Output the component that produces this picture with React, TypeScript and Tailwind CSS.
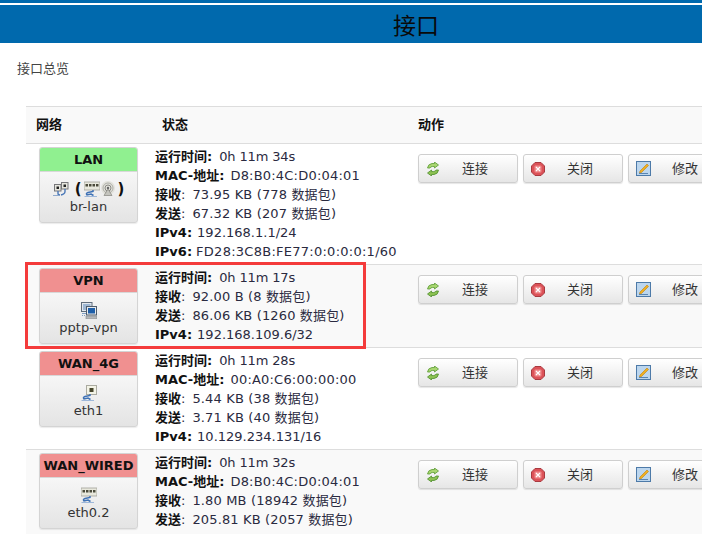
import React from "react";

const font = "font-['DejaVu_Sans','Noto_Sans_CJK_SC',sans-serif]";

function Cable() {
  return (
    <>
      <path d="M9 9 V10.5 L4 11.5 Q1.5 12.5 3 14 L7 13 L9.5 14.5" fill="none" stroke="#3f72b5" strokeWidth="1.5" />
      <path d="M0.5 15.5 H13" stroke="#9db7d9" strokeWidth="1.2" />
    </>
  );
}

function EthIcon({ kind = "single" }: { kind?: "single" | "switch" }) {
  return (
    <svg width="16" height="17" viewBox="0 0 16 17" className="shrink-0">
      {kind === "single" ? (
        <>
          <rect x="5.5" y="0.5" width="10" height="9" fill="#f3f3e6" stroke="#aaaaa0" />
          <rect x="8.5" y="3" width="4" height="4" fill="#45452a" />
        </>
      ) : (
        <>
          <rect x="0" y="1" width="16" height="8" fill="#e8e8dc" stroke="#a0a098" strokeWidth="0.8" />
          <rect x="1.5" y="3" width="2.5" height="2.5" fill="#4a4a3a" />
          <rect x="5" y="3" width="2.5" height="2.5" fill="#4a4a3a" />
          <rect x="8.5" y="3" width="2.5" height="2.5" fill="#4a4a3a" />
          <rect x="12" y="3" width="2.5" height="2.5" fill="#4a4a3a" />
        </>
      )}
      <Cable />
    </svg>
  );
}

function PairIcon() {
  return (
    <svg width="16" height="16" viewBox="0 0 16 16" className="shrink-0">
      <rect x="1.5" y="3.5" width="6.5" height="6.5" fill="#e6e6de" stroke="#77777a" />
      <rect x="8.5" y="1.5" width="6.5" height="6.5" fill="#e6e6de" stroke="#77777a" />
      <rect x="3.5" y="5.5" width="2.5" height="2.5" fill="#222" />
      <rect x="10.5" y="3.5" width="2.5" height="2.5" fill="#222" />
      <path d="M5 10 V12.5 Q5 14 7 14 M12 8 V10.5 Q12 13 8 14" fill="none" stroke="#4a78b8" strokeWidth="1.4" />
      <path d="M0 14.5 H6" stroke="#8fa9cc" />
    </svg>
  );
}

function WifiIcon() {
  return (
    <svg width="16" height="16" viewBox="0 0 16 16" className="shrink-0">
      <circle cx="8" cy="7" r="7" fill="#e2e2dc" />
      <circle cx="8" cy="7" r="5" fill="none" stroke="#aeaea8" />
      <circle cx="8" cy="7" r="3" fill="none" stroke="#8a8a84" />
      <circle cx="8" cy="7" r="1.2" fill="#666" />
      <path d="M8 8 L4 14.5 H12 Z" fill="#c4c4be" stroke="#85857f" strokeWidth="0.7" />
    </svg>
  );
}

function VpnIcon() {
  return (
    <svg width="16" height="17" viewBox="0 0 16 17" className="shrink-0">
      <rect x="0.5" y="0.5" width="10.5" height="9" fill="#e3e8ee" stroke="#5f6d7c" />
      <rect x="2" y="2" width="7.5" height="6" fill="#9fb8d4" />
      <path d="M1 11.5 h4 M1 13.5 h1 M3 13.5 h1" stroke="#7f9fc4" />
      <rect x="5.5" y="4.5" width="10" height="8.5" fill="#e8ebee" stroke="#4f5d6c" />
      <rect x="7" y="6" width="7" height="5.5" fill="#1f5fa8" />
      <rect x="5" y="14" width="11" height="3" fill="#b5b8ba" stroke="#85888a" strokeWidth="0.6" />
    </svg>
  );
}

function ReloadIcon() {
  return (
    <svg width="14" height="14" viewBox="0 0 14 14" className="shrink-0">
      <path d="M1.5 6 Q2 2 6 1.5 L8.5 1.5 L8.5 0 L12.5 3 L8.5 6 L8.5 4.5 L6.5 4.5 Q4.5 4.5 4 6 Z" fill="#a8d670" stroke="#5a9a34" strokeWidth="0.8" />
      <path d="M12.5 8 Q12 12 8 12.5 L5.5 12.5 L5.5 14 L1.5 11 L5.5 8 L5.5 9.5 L7.5 9.5 Q9.5 9.5 10 8 Z" fill="#8cc152" stroke="#4f8f2c" strokeWidth="0.8" />
    </svg>
  );
}

function StopIcon() {
  return (
    <svg width="14" height="14" viewBox="0 0 14 14" className="shrink-0">
      <path d="M4 0.5 H10 L13.5 4 V10 L10 13.5 H4 L0.5 10 V4 Z" fill="#dc5258" stroke="#a83a40" />
      <rect x="3.5" y="3.5" width="7" height="7" rx="1" fill="#ee8a8c" />
      <path d="M5 5 L9 9 M9 5 L5 9" stroke="#fff" strokeWidth="1.2" />
    </svg>
  );
}

function EditIcon() {
  return (
    <svg width="15" height="15" viewBox="0 0 15 15" className="shrink-0">
      <rect x="0.5" y="0.5" width="14" height="14" fill="#bcd6ee" stroke="#4d7aa8" />
      <path d="M4 10 L11 3 L12.5 4.5 L5.5 11.5 L3.5 12 Z" fill="#f0b020" stroke="#c08010" strokeWidth="0.6" />
      <path d="M3 12.5 H12" stroke="#5a85b0" />
    </svg>
  );
}

function Card({ title, color, name, children }: { title: string; color: string; name: string; children: React.ReactNode }) {
  return (
    <div className="w-[99px] h-[76px] flex flex-col rounded-[3px] border border-[#d4d4d4] bg-gradient-to-b from-white to-[#e4e4e4] shadow-[0_1px_1px_rgba(0,0,0,0.08)] overflow-hidden">
      <div className={`h-[24px] shrink-0 ${color} border-b border-[#d8d8d8] flex items-center justify-center text-[13px] font-bold text-[#111] whitespace-nowrap`}>
        {title}
      </div>
      <div className="flex-1 flex flex-col items-center pt-[9px]">
        <div className="h-[16px] flex items-center justify-center text-[13px] font-bold text-[#111]">{children}</div>
        <div className="text-[13px] leading-[19px] text-[#333]">{name}</div>
      </div>
    </div>
  );
}

function Btn({ icon, label }: { icon: React.ReactNode; label: string }) {
  return (
    <div className="w-[100px] h-[29px] shrink-0 flex items-center pl-[6px] rounded-[3px] border border-[#cfcfcf] bg-gradient-to-b from-white to-[#e6e6e6] shadow-[0_1px_1px_rgba(0,0,0,0.1)]">
      <div className="w-[16px] flex justify-center">{icon}</div>
      <div className="flex-1 text-center text-[13px] text-[#333] pr-[8px]">{label}</div>
    </div>
  );
}

function Line({ k, v, plain = false, vc }: { k: string; v: string; plain?: boolean; vc: string }) {
  return (
    <div className="h-[19px] leading-[19px] whitespace-nowrap text-[13px] text-[#2a2a40]">
      <b className="text-[#111]">{k}</b>
      {plain ? <span>:</span> : <b className="text-[#111]">:</b>}
      <span className={vc}>{v}</span>
    </div>
  );
}

function Row({ card, lines, className = "" }: { card: React.ReactNode; lines: React.ReactNode; className?: string }) {
  return (
    <div className={`flex border-b border-[#dddddd] ${className}`}>
      <div className="w-[129px] shrink-0 pl-[13px] pt-[3px]">{card}</div>
      <div className="w-[263px] shrink-0 pt-[3px] pb-[3px]">{lines}</div>
      <div className="flex gap-[5px] pt-[10px]">
        <Btn icon={<ReloadIcon />} label="连接" />
        <Btn icon={<StopIcon />} label="关闭" />
        <Btn icon={<EditIcon />} label="修改" />
      </div>
    </div>
  );
}

const TIME = "ml-[7px] tracking-[-0.15px]";
const RX = "ml-[7px] tracking-[0.15px]";
const IP = "ml-[5px]";
const MAC = "ml-[6px] tracking-[0.2px]";
const IP6 = "ml-[4px] tracking-[0.26px]";

export default function App() {
  return (
    <div className={`relative w-[702px] h-[534px] overflow-hidden bg-white ${font}`}>
      <div className="h-[3px] bg-[#0069ad]" />
      <div className="h-[2px] bg-white" />
      <div className="h-[38px] bg-[#0069ad] flex items-center justify-center pl-[130px] text-[23px] text-[#0a0a0a] font-['Noto_Sans_CJK_SC',sans-serif]">
        接口
      </div>
      <div className="pl-[17px] pt-[16px] h-[63px] text-[13px] leading-[19px] text-[#444]">接口总览</div>

      <div className="ml-[26px] w-[760px] border-t border-[#dddddd]">
        <div className="flex h-[37px] items-center bg-[#f9f9f9] border-b border-[#dddddd] text-[13px] font-bold text-[#111]">
          <div className="w-[136px] pl-[10px]">网络</div>
          <div className="w-[256px]">状态</div>
          <div>动作</div>
        </div>

        <Row
          className="h-[121px]"
          card={
            <Card title="LAN" color="bg-[#90f090]" name="br-lan">
              <PairIcon />
              <span className="ml-[6px] mr-[2px] text-[15px]">(</span>
              <EthIcon kind="switch" />
              <WifiIcon />
              <span className="ml-[2px] text-[15px]">)</span>
            </Card>
          }
          lines={
            <>
              <Line k="运行时间" v="0h 11m 34s" vc={TIME} />
              <Line k="MAC-地址" v="D8:B0:4C:D0:04:01" vc={MAC} />
              <Line k="接收" v="73.95 KB (778 数据包)" plain vc={RX} />
              <Line k="发送" v="67.32 KB (207 数据包)" plain vc={RX} />
              <Line k="IPv4" v="192.168.1.1/24" vc={IP} />
              <Line k="IPv6" v="FD28:3C8B:FE77:0:0:0:0:1/60" vc={IP6} />
            </>
          }
        />
        <Row
          className="h-[83px] bg-[#f9f9f9]"
          card={
            <Card title="VPN" color="bg-[#f09090]" name="pptp-vpn">
              <VpnIcon />
            </Card>
          }
          lines={
            <>
              <Line k="运行时间" v="0h 11m 17s" vc={TIME} />
              <Line k="接收" v="92.00 B (8 数据包)" plain vc={RX} />
              <Line k="发送" v="86.06 KB (1260 数据包)" plain vc={RX} />
              <Line k="IPv4" v="192.168.109.6/32" vc={IP} />
            </>
          }
        />
        <Row
          className="h-[102px]"
          card={
            <Card title="WAN_4G" color="bg-[#f09090]" name="eth1">
              <EthIcon />
            </Card>
          }
          lines={
            <>
              <Line k="运行时间" v="0h 11m 28s" vc={TIME} />
              <Line k="MAC-地址" v="00:A0:C6:00:00:00" vc={MAC} />
              <Line k="接收" v="5.44 KB (38 数据包)" plain vc={RX} />
              <Line k="发送" v="3.71 KB (40 数据包)" plain vc={RX} />
              <Line k="IPv4" v="10.129.234.131/16" vc={IP} />
            </>
          }
        />
        <Row
          className="h-[101px] bg-[#f9f9f9]"
          card={
            <Card title="WAN_WIRED" color="bg-[#f09090]" name="eth0.2">
              <EthIcon kind="switch" />
            </Card>
          }
          lines={
            <>
              <Line k="运行时间" v="0h 11m 32s" vc={TIME} />
              <Line k="MAC-地址" v="D8:B0:4C:D0:04:01" vc={MAC} />
              <Line k="接收" v="1.80 MB (18942 数据包)" plain vc={RX} />
              <Line k="发送" v="205.81 KB (2057 数据包)" plain vc={RX} />
            </>
          }
        />
      </div>

      <div className="absolute left-[25px] top-[262px] w-[341px] h-[87px] border-[3px] border-[#f43b3b] pointer-events-none" />
    </div>
  );
}
